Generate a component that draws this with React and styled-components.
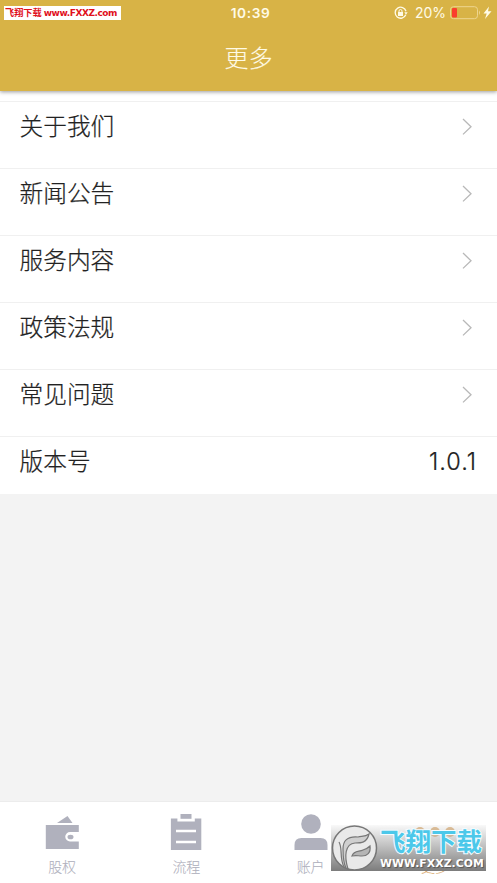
import React from 'react';
import styled, { createGlobalStyle } from 'styled-components';

const GlobalStyle = createGlobalStyle`
  * {
    box-sizing: border-box;
  }

  body {
    margin: 0;
    background: #f3f3f3;
    font-family: 'Inter', 'Noto Sans CJK SC', sans-serif;
    color: #222;
  }
`;

const Screen = styled.div`
  position: relative;
  display: flex;
  flex-direction: column;
  height: 883px;
  overflow: hidden;
`;

const Header = styled.header`
  position: relative;
  height: 91px;
  flex-shrink: 0;
  background: #d8b346;
  color: #fffbe6;
  box-shadow: 0 1px 4px rgba(0, 0, 0, 0.4);
`;

const StatusBar = styled.div`
  display: grid;
  grid-template-columns: 1fr auto 1fr;
  align-items: center;
  height: 25px;
  padding: 0 5px 0 4px;
`;

const SiteTag = styled.div`
  justify-self: start;
  display: flex;
  align-items: center;
  width: 117px;
  height: 14px;
  padding-left: 1px;
  background: #fff;
  color: #e0101c;
  font-family: 'DejaVu Sans', 'Noto Sans CJK SC', sans-serif;
  font-size: 9.2px;
  font-weight: 700;
  line-height: 14px;
  white-space: nowrap;

  span {
    margin-left: 2px;
    font-size: 9px;
    letter-spacing: -0.45px;
  }
`;

const Clock = styled.div`
  padding-left: 5px;
  font-size: 13.7px;
  font-weight: 600;
  letter-spacing: 0.6px;
  line-height: 16px;
`;

const StatusIcons = styled.div`
  justify-self: end;
  display: flex;
  align-items: center;
`;

const BatteryText = styled.span`
  margin: 0 4px 0 7px;
  font-size: 14px;
  line-height: 16px;
`;

const Title = styled.h1`
  margin: 16px 0 0;
  text-align: center;
  font-size: 24px;
  font-weight: 300;
  line-height: 35px;
  -webkit-text-stroke: 0.1px currentColor;
`;

const List = styled.ul`
  margin: 0;
  padding: 10px 0 0;
  list-style: none;
  background: #fff;
`;

const Row = styled.li`
  display: flex;
  align-items: flex-start;
  justify-content: space-between;
  height: ${props => (props.$last ? '58px' : '67.1px')};
  padding: 8px 20px 0 19.5px;
  border-top: 1px solid #f0f0f0;
  font-size: 23.7px;
  font-weight: 300;
  line-height: 34px;
  -webkit-text-stroke: 0.22px currentColor;
`;

const Version = styled.span`
  font-size: 23.5px;
  letter-spacing: 1px;
`;

const Chevron = styled.svg`
  width: 10px;
  height: 18px;
  margin: 8px 5px 0 0;
`;

const TabBar = styled.nav`
  display: grid;
  grid-template-columns: repeat(4, 1fr);
  height: 82px;
  margin-top: auto;
  border-top: 1px solid #ececec;
  background: #fff;
`;

const Tab = styled.div`
  display: flex;
  flex-direction: column;
  align-items: center;
  padding-top: 12px;
  color: ${props => (props.$active ? '#d9a86c' : '#b0b1bd')};
  font-size: 14px;
  font-weight: 300;
  line-height: 20px;
  -webkit-text-stroke: 0.1px currentColor;

  svg {
    margin-bottom: 7px;
  }
`;

const Watermark = styled.div`
  position: absolute;
  left: 331px;
  top: 825px;
  display: flex;
  width: 155px;
  height: 46px;
  background: linear-gradient(rgba(235, 235, 235, 0.3), rgba(175, 175, 175, 0.85) 50%, rgba(120, 120, 120, 0.97));

  svg {
    flex-shrink: 0;
  }
`;

const WatermarkText = styled.div`
  display: flex;
  flex-direction: column;
  margin-left: 2px;
  white-space: nowrap;
`;

const WatermarkName = styled.div`
  height: 31px;
  color: #4cc8ea;
  font-size: 25.5px;
  font-weight: 700;
  line-height: 34px;
  paint-order: stroke fill;
  -webkit-text-stroke: 2px #f4fcff;
`;

const WatermarkUrl = styled.div`
  color: #fff;
  font-family: 'DejaVu Sans', sans-serif;
  font-size: 10.8px;
  font-weight: 700;
  line-height: 16px;
  letter-spacing: 0.1px;
  text-shadow: 1px 1px 1px #555;
`;

const ORIENTATION_LOCK = (
  <svg width="14" height="14" viewBox="0 0 14 14" fill="none" stroke="#fffbe6">
    <path d="M11.8 8.8A5.5 5.5 0 1 1 12 5.2" strokeWidth="1.3" />
    <path d="M10.3 6.3h3.4L12 8.7z" fill="#fffbe6" stroke="none" />
    <rect x="4" y="6" width="5" height="4" fill="#fffbe6" stroke="none" />
    <path d="M5 6V5a1.5 1.5 0 0 1 3 0v1" />
  </svg>
);

const BATTERY = (
  <svg width="42" height="14" viewBox="0 0 42 14">
    <rect x="0.5" y="0.7" width="27" height="12" rx="3" fill="none" stroke="#eed58f" />
    <rect x="2" y="2" width="5" height="9.5" rx="1" fill="#fa3e2d" />
    <path d="M29 4.5q2 2.2 0 4.4z" fill="#eed58f" />
    <path d="M39 .5l-5.500 7h3.200L35 13l6.500-7.700h-3.500z" fill="#fffbe6" />
  </svg>
);

const tabs = [
  {
    label: '股权',
    icon: (
      <svg width="34" height="36" viewBox="0 0 34 36" fill="currentColor">
        <path d="M12 9L22.500 2l5 7z" />
        <path d="M.8 11h33v7H25a4.700 4.700 0 0 0 0 9.500h8.800V35H.8z" />
        <ellipse cx="25.500" cy="23" rx="3" ry="2.300" />
      </svg>
    ),
  },
  {
    label: '流程',
    icon: (
      <svg width="32" height="36" viewBox="0 0 32 36" fill="currentColor">
        <path d="M.9 4.500h6.500v3h17.400v-3h6.500V36H.9z" />
        <rect x="10.500" y="0" width="11" height="4.800" />
        <path d="M6 17h20M6 28h20" stroke="#fff" strokeWidth="2.300" />
      </svg>
    ),
  },
  {
    label: '账户',
    icon: (
      <svg width="34" height="36" viewBox="0 0 34 36" fill="currentColor">
        <circle cx="17" cy="10" r="9.800" />
        <path d="M.5 36v-5q0-7 7-7h19q7 0 7 7v5z" />
      </svg>
    ),
  },
  {
    label: '更多',
    active: true,
    icon: (
      <svg width="40" height="36" viewBox="0 0 40 36" fill="currentColor">
        <circle cx="5" cy="18" r="5" />
        <circle cx="20" cy="18" r="5" />
        <circle cx="35" cy="18" r="5" />
      </svg>
    ),
  },
];

const items = ['关于我们', '新闻公告', '服务内容', '政策法规', '常见问题'];

const App = () => (
  <>
    <GlobalStyle />
    <Screen>
      <Header>
        <StatusBar>
          <SiteTag>飞翔下载<span>www.FXXZ.com</span></SiteTag>
          <Clock>10:39</Clock>
          <StatusIcons>
            {ORIENTATION_LOCK}
            <BatteryText>20%</BatteryText>
            {BATTERY}
          </StatusIcons>
        </StatusBar>
        <Title>更多</Title>
      </Header>

      <List>
        {items.map(item => (
          <Row key={item}>
            {item}
            <Chevron viewBox="0 0 10 18" fill="none" stroke="#b8b8b8" strokeWidth="1.3">
              <path d="M1 1l8 7.700L1 16.400" />
            </Chevron>
          </Row>
        ))}
        <Row $last>
          版本号
          <Version>1.0.1</Version>
        </Row>
      </List>

      <TabBar>
        {tabs.map(tab => (
          <Tab key={tab.label} $active={tab.active}>
            {tab.icon}
            {tab.label}
          </Tab>
        ))}
      </TabBar>

      <Watermark>
        <svg width="47" height="46" viewBox="0 0 47 46">
          <circle cx="23.500" cy="23" r="22" fill="#e9e9e9" stroke="#777" strokeWidth="1.500" />
          <path
            d="M8 17c4 7 0 15 5 25l4 2c-4-13-3-25 7-26 6 0 12 0 14-9-4 3-7 2-11 3-11-1-15 4-15 12 0 7 0 13 3 19"
            fill="#cfcfcf"
            stroke="#777"
            strokeWidth="1.200"
          />
          <path d="M21 31c2-6 7-4 11-6 3-1 5-2 7-4 1 7-3 10-8 10-4 0-6-1-10 0z" fill="#b5b5b5" stroke="#777" strokeWidth="1.200" />
        </svg>
        <WatermarkText>
          <WatermarkName>飞翔下载</WatermarkName>
          <WatermarkUrl>WWW.FXXZ.COM</WatermarkUrl>
        </WatermarkText>
      </Watermark>
    </Screen>
  </>
);

export default App;
